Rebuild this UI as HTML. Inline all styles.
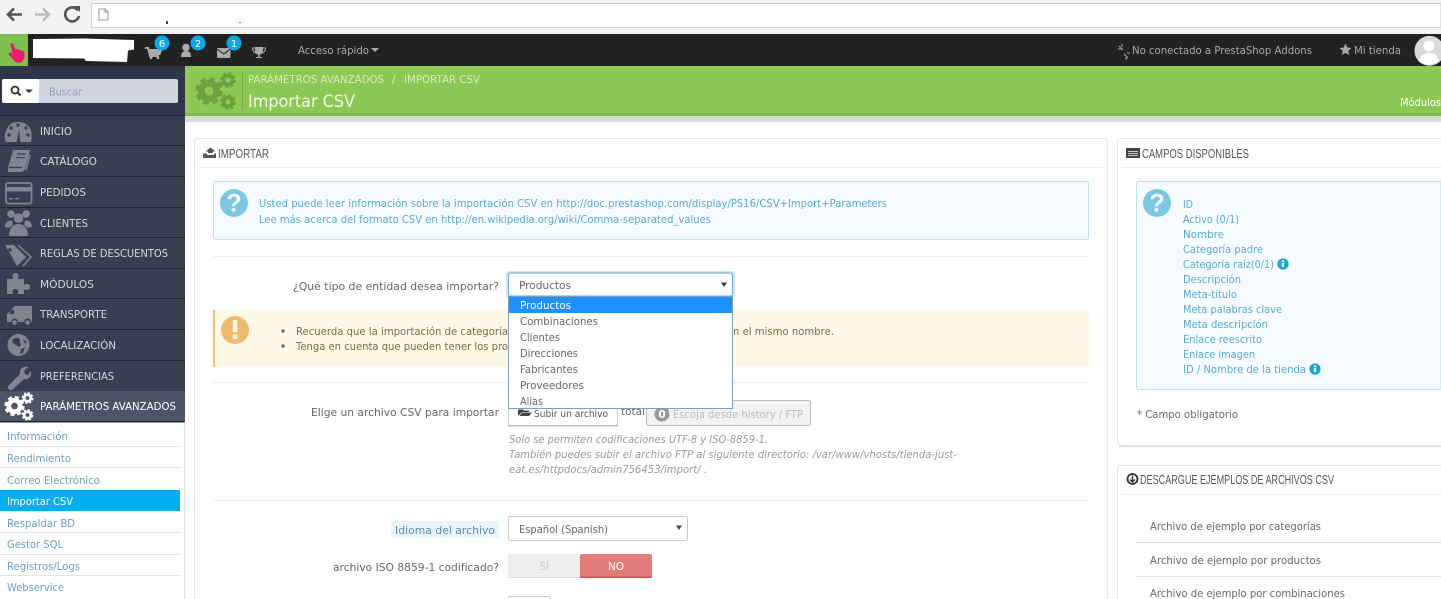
<!DOCTYPE html>
<html lang="es"><head><meta charset="utf-8"><title>Importar CSV</title>
<style>
html,body{margin:0;padding:0;background:#fff;width:1441px;height:599px;overflow:hidden}
svg{display:block}
text{font-family:"DejaVu Sans",sans-serif;font-size:11px;fill:#666}
.s text,text.s{fill:#d5d8de;font-size:11px}
.sub text{fill:#6a9fc0;font-size:11px}
.i text,text.i{fill:#5aa9cd}
.c{font-family:"Liberation Sans",sans-serif;font-size:13px;fill:#555}
.it{font-style:italic;fill:#999}
</style></head><body>
<svg xmlns="http://www.w3.org/2000/svg" width="1441" height="599" viewBox="0 0 1441 599">
<defs>
<g id="gear"><circle r="6" fill="none" stroke="currentColor" stroke-width="5"/><circle r="9" fill="none" stroke="currentColor" stroke-width="3.4" stroke-dasharray="4.1 2.97"/></g>
<g id="q"><circle r="14" fill="#7cc8e4"/><text x="0" y="8.5" text-anchor="middle" style="font-family:'Liberation Sans',sans-serif;font-size:25px;font-weight:bold;fill:#f4fbfe">?</text></g>
<g id="inf"><circle r="5.6" fill="#16a3de"/><rect x="-1.2" y="-1" width="2.4" height="4" fill="#fff"/><rect x="-1.2" y="-3.6" width="2.4" height="1.8" fill="#fff"/></g>
</defs>

<!-- browser chrome -->
<rect width="1441" height="34" fill="#f3f3f3"/>
<path d="M1441 3.500H93Q91.500 3.500 91.500 5V26Q91.500 27.500 93 27.500H1441Z" fill="#fff" stroke="#cfcfcf"/>
<path d="M8 14.500H22M14 8.500L8 14.500L14 20.500" fill="none" stroke="#555" stroke-width="2.600"/>
<path d="M35 14.500H49M43 8.500L49 14.500L43 20.500" fill="none" stroke="#bdbdbd" stroke-width="2.600"/>
<path d="M78 10.500A7 7 0 1 0 79 16" fill="none" stroke="#555" stroke-width="2.600"/><path d="M74 6L80 6L80 12Z" fill="#555"/>
<path d="M99 9H105L108 12V20H99Z" fill="#fff" stroke="#999"/><path d="M105 9V12H108" fill="none" stroke="#999"/>
<rect x="166" y="21" width="2" height="3" fill="#444"/><rect x="239" y="22" width="2" height="1" fill="#777"/>

<!-- top bar -->
<rect y="34" width="1441" height="32" fill="#222"/>
<rect y="34" width="28" height="32" fill="#7fbf4d"/>
<path d="M10.500 44.500C10.500 42.500 13 42.500 13.500 44.500L15.500 49.500C17 48.500 18 49 18.500 50C20 49.500 21 50 21.500 51C23 50.500 24.500 51.500 24.500 53.500L24.500 58L21.500 62.500L16 62.500L13.500 60L8.500 54.500C8 52.500 10 52 12.500 53.500Z" fill="#ec1a73"/>
<path d="M33 39L85 38.500L134 40V49.500L128 50.500L127 62L86 61L84 58.500L33 58Z" fill="#fff"/>
<!-- cart -->
<path d="M145 48H148L150 56H159M149 50H161L159.500 54H150" fill="none" stroke="#aaa" stroke-width="2"/><rect x="149.500" y="50" width="10" height="4" fill="#aaa"/><circle cx="151" cy="58" r="1.300" fill="#aaa"/><circle cx="158" cy="58" r="1.300" fill="#aaa"/>
<!-- user -->
<circle cx="186" cy="47.500" r="3.800" fill="#aaa"/><path d="M181 57C181 52 183 51 186 51C189 51 191 52 191 57Z" fill="#aaa"/>
<!-- mail -->
<rect x="217" y="48" width="13.500" height="10" rx="1" fill="#aaa"/><path d="M217 49L223.700 54L230.500 49" fill="none" stroke="#222" stroke-width="1"/>
<!-- trophy -->
<path d="M255 47H263V51C263 54 261 54 259.800 55V57H262V58H256V57H258.200V55C257 54 255 54 255 51Z" fill="#aaa"/><path d="M255 48H252.500C252.500 51 254 52.500 256 53M263 48H265.500C265.500 51 264 52.500 262 53" fill="none" stroke="#aaa"/>
<g>
<circle cx="162" cy="43" r="7.500" fill="#0ba8e6"/><circle cx="198" cy="43" r="7.500" fill="#0ba8e6"/><circle cx="234" cy="43" r="7.500" fill="#0ba8e6"/>
<text x="162" y="47" text-anchor="middle" style="fill:#fff;font-size:10px">6</text><text x="198" y="47" text-anchor="middle" style="fill:#fff;font-size:10px">2</text><text x="234" y="47" text-anchor="middle" style="fill:#fff;font-size:10px">1</text>
</g>
<text x="298" y="54" textLength="71" lengthAdjust="spacingAndGlyphs" style="fill:#a9a9a9;font-size:10.500px">Acceso rápido</text>
<path d="M371 48H379L375 52Z" fill="#a9a9a9"/>
<path d="M1119 46L1123 50M1124 54L1128 58M1122 44V47M1118 49H1121M1126 57V60M1127 53H1130" stroke="#aaa" fill="none"/>
<text x="1132" y="54" textLength="180" lengthAdjust="spacingAndGlyphs" style="fill:#a9a9a9;font-size:10.500px">No conectado a PrestaShop Addons</text>
<path d="M1345.500 43.500L1347.300 47.500L1351.500 48L1348.300 50.800L1349.200 55L1345.500 52.800L1341.800 55L1342.700 50.800L1339.500 48L1343.700 47.500Z" fill="#aaa"/>
<text x="1354" y="54" textLength="47" lengthAdjust="spacingAndGlyphs" style="fill:#a9a9a9;font-size:10.500px">Mi tienda</text>
<path d="M1441 41.200A15 15 0 1 0 1441 60.400Z" fill="#d9d9d9"/><circle cx="1429" cy="46" r="5.500" fill="#fff"/><path d="M1419 62C1420 54 1425 53 1429 53C1433 53 1438 54 1439 62L1429 65Z" fill="#fff"/>

<!-- sidebar -->
<rect y="66" width="185" height="533" fill="#fff"/>
<rect y="66" width="185" height="50" fill="#2f3648"/>
<rect x="2" y="79" width="176" height="24" rx="2" fill="#d0d5e0"/>
<rect x="2" y="79" width="37" height="24" rx="2" fill="#fff"/>
<circle cx="15" cy="90" r="3.500" fill="none" stroke="#333" stroke-width="1.800"/><path d="M17.500 92.500L20.500 95.500" stroke="#333" stroke-width="2"/><path d="M25 89.500H33L29 93Z" fill="#333"/>
<text x="49" y="95.500" textLength="33" lengthAdjust="spacingAndGlyphs" style="fill:#97a0ae;font-size:10.500px">Buscar</text>

<rect y="115" width="185" height="306" fill="#383f50"/>
<g fill="#22262f"><rect y="115" width="185" height="1"/><rect y="145" width="185" height="1"/><rect y="176" width="185" height="1"/><rect y="207" width="185" height="1"/><rect y="237" width="185" height="1"/><rect y="268" width="185" height="1"/><rect y="298" width="185" height="1"/><rect y="329" width="185" height="1"/><rect y="360" width="185" height="1"/></g>
<rect y="391" width="185" height="30" fill="#4c5568"/><rect y="421" width="185" height="1.500" fill="#22262f"/>

<!-- sidebar icons -->
<g fill="#82858f">
<path d="M6 142A12.500 12.500 0 0 1 6 131C8 124 14 122 18.500 122C23 122 29 124 31 131C32 135 31.500 139 31 142Z"/>
<path d="M16.500 142L19 130L20.500 142Z" fill="#383f50"/>
<circle cx="11" cy="128" r="1.700" fill="#383f50"/><circle cx="18" cy="125" r="1.700" fill="#383f50"/><circle cx="26" cy="128" r="1.700" fill="#383f50"/><circle cx="9" cy="135" r="1.700" fill="#383f50"/><circle cx="28" cy="135" r="1.700" fill="#383f50"/>
<path d="M13 150H30L26 166C25.500 170 23 172 20 172H8L8 168Z"/><path d="M9 167.500H22" stroke="#383f50" stroke-width="1.300"/><path d="M17 154H26M16 157.500H25" stroke="#383f50" stroke-width="1.200"/>
<path d="M26 170L30 155" stroke="#82858f" stroke-width="1.500" fill="none"/>
<rect x="6" y="183" width="25.500" height="20.500" rx="2" fill="none" stroke="#82858f" stroke-width="1.800"/><rect x="6" y="187" width="25" height="4.500"/><rect x="9" y="198" width="4" height="1.400"/><rect x="15" y="198" width="4" height="1.400"/>
<circle cx="11" cy="214" r="3.800"/><circle cx="26" cy="214" r="3.800"/><circle cx="18.500" cy="218" r="4.800"/><path d="M5 227C5 222 8 220.500 12 220.500L13 225L9 228ZM32 227C32 222 29 220.500 25 220.500L24 225L28 228Z"/><path d="M9 236C9 228 13 224 18.500 224C24 224 28 228 28 236Z"/>
<path d="M5 245H14L26 257L17 266Z"/><circle cx="10" cy="250" r="1.800" fill="#383f50"/><path d="M18 245L31 257L23 266" fill="none" stroke="#82858f" stroke-width="1.500"/>
<path d="M7 279H13C12 275 13 273 15.500 273C18 273 19 275 18 279H24V285C27 283 30 284 30 287C30 290 27 291 24 289V294H18C19 290 17 289 15.500 289C13 289 12 291 13 294H7Z"/>
<path d="M15 306H32V322H31A3.500 3.500 0 0 0 24 322H18A3.500 3.500 0 0 0 11 322H7V314Z"/><path d="M11 310H14V314H9Z" fill="#383f50"/><circle cx="14.500" cy="322.500" r="2.300"/><circle cx="27.500" cy="322.500" r="2.300"/>
<circle cx="18.500" cy="345" r="11"/><path d="M12 340C15 337 19 337 20 340C19 343 23 345 19 347C17 345 13 345 12 340ZM21 349L25 347L23 353L20 354ZM23 339L27 342L25 344Z" fill="#383f50"/>
<path d="M8 386L20 374C19 369 23 366 28 367L24 371L25 374L28 375L31 371C32 376 29 380 24 379L12 390C10 391 7 388 8 386Z"/>
</g>
<g color="#fff" fill="#fff">
<use href="#gear" transform="translate(14.500 406) scale(.95)"/>
<use href="#gear" transform="translate(27.500 398) scale(.55)"/>
<use href="#gear" transform="translate(27.500 415) scale(.55)"/>
</g>

<g class="s">
<text x="40" y="135" textLength="32" lengthAdjust="spacingAndGlyphs">INICIO</text>
<text x="40" y="165" textLength="57" lengthAdjust="spacingAndGlyphs">CATÁLOGO</text>
<text x="40" y="196" textLength="46" lengthAdjust="spacingAndGlyphs">PEDIDOS</text>
<text x="40" y="227" textLength="48" lengthAdjust="spacingAndGlyphs">CLIENTES</text>
<text x="40" y="257" textLength="128" lengthAdjust="spacingAndGlyphs">REGLAS DE DESCUENTOS</text>
<text x="40" y="288" textLength="54" lengthAdjust="spacingAndGlyphs">MÓDULOS</text>
<text x="40" y="318" textLength="67" lengthAdjust="spacingAndGlyphs">TRANSPORTE</text>
<text x="40" y="349" textLength="76" lengthAdjust="spacingAndGlyphs">LOCALIZACIÓN</text>
<text x="40" y="380" textLength="74" lengthAdjust="spacingAndGlyphs">PREFERENCIAS</text>
<text x="40" y="410" textLength="136" lengthAdjust="spacingAndGlyphs" style="fill:#fff">PARÁMETROS AVANZADOS</text>
</g>

<rect x="184" y="422" width="1" height="177" fill="#e3e3e3"/>
<g fill="#d6e9f2"><rect y="446" width="180" height="1"/><rect y="467" width="180" height="1"/><rect y="532" width="180" height="1"/><rect y="554" width="180" height="1"/><rect y="575" width="180" height="1"/></g>
<rect y="490" width="180" height="21" fill="#00aff0"/>
<g class="sub">
<text x="7" y="440" textLength="61" lengthAdjust="spacingAndGlyphs">Información</text>
<text x="7" y="462" textLength="64" lengthAdjust="spacingAndGlyphs">Rendimiento</text>
<text x="7" y="484" textLength="93" lengthAdjust="spacingAndGlyphs">Correo Electrónico</text>
<text x="7" y="505" textLength="66" lengthAdjust="spacingAndGlyphs" style="fill:#fff">Importar CSV</text>
<text x="7" y="527" textLength="68" lengthAdjust="spacingAndGlyphs">Respaldar BD</text>
<text x="7" y="548" textLength="56" lengthAdjust="spacingAndGlyphs">Gestor SQL</text>
<text x="7" y="570" textLength="73" lengthAdjust="spacingAndGlyphs">Registros/Logs</text>
<text x="7" y="591" textLength="57" lengthAdjust="spacingAndGlyphs">Webservice</text>
</g>

<!-- green header -->
<rect x="185" y="66" width="1256" height="47" fill="#8bc954"/>
<rect x="185" y="113" width="1256" height="3" fill="#7fb94c"/>
<rect x="185" y="116" width="1256" height="6" fill="#dadada"/>
<rect x="242" y="72" width="1" height="38" fill="#75ad42"/>
<g color="#6da23f">
<use href="#gear" transform="translate(209 91) scale(1.300)"/>
<use href="#gear" transform="translate(228 80) scale(.75)"/>
<use href="#gear" transform="translate(228 102) scale(.75)"/>
</g>
<text x="248" y="83" textLength="136" lengthAdjust="spacingAndGlyphs" style="fill:#d6eebd;font-size:10.500px">PARÁMETROS AVANZADOS</text>
<text x="392" y="83" style="fill:#d6eebd;font-size:10.500px">/</text>
<text x="404" y="83" textLength="76" lengthAdjust="spacingAndGlyphs" style="fill:#d6eebd;font-size:10.500px">IMPORTAR CSV</text>
<text x="248" y="107" textLength="107" lengthAdjust="spacingAndGlyphs" style="fill:#f1f9e8;font-size:17px">Importar CSV</text>
<text x="1400" y="106" textLength="41" lengthAdjust="spacingAndGlyphs" style="fill:#fff;font-size:10.500px">Módulos</text>

<!-- main panel -->
<path d="M194.500 599V142.500Q194.500 138.500 198.500 138.500H1103.500Q1107.500 138.500 1107.500 142.500V599" fill="#fff" stroke="#e6e6e6"/>
<rect x="199" y="167" width="904" height="1" fill="#eee"/>
<path d="M208 153V151.500H205.500L210.500 147.500L215.500 151.500H213V153ZM203 153.500H207V155H214V153.500H216V158H203Z" fill="#555"/>
<text class="c" x="218" y="158" textLength="51" lengthAdjust="spacingAndGlyphs">IMPORTAR</text>

<rect x="213.500" y="181.500" width="875" height="58" rx="2" fill="#f5fbfe" stroke="#bfe3ee"/>
<use href="#q" x="234" y="203"/>
<g class="i">
<text x="259" y="207" textLength="628" lengthAdjust="spacingAndGlyphs">Usted puede leer información sobre la importación CSV en http://doc.prestashop.com/display/PS16/CSV+Import+Parameters</text>
<text x="259" y="223" textLength="452" lengthAdjust="spacingAndGlyphs">Lee más acerca del formato CSV en http://en.wikipedia.org/wiki/Comma-separated_values</text>
</g>
<rect x="213" y="256" width="876" height="1" fill="#eee"/>
<text x="293" y="290" textLength="206" lengthAdjust="spacingAndGlyphs">¿Qué tipo de entidad desea importar?</text>

<!-- warning -->
<rect x="213" y="310" width="876" height="57" fill="#fef8e7"/>
<rect x="213" y="310" width="2" height="57" fill="#efbf78"/>
<circle cx="235" cy="330" r="14" fill="#efb970"/>
<rect x="232.800" y="320" width="4.500" height="12" fill="#fef8e7"/><rect x="232.800" y="334.500" width="4.500" height="4.500" fill="#fef8e7"/>
<circle cx="283" cy="331" r="1.700" fill="#7a6a4d"/><circle cx="283" cy="346" r="1.700" fill="#7a6a4d"/>
<text x="296" y="335" textLength="212" lengthAdjust="spacingAndGlyphs" style="fill:#7d6a4a">Recuerda que la importación de categoría</text>
<text x="296" y="350" textLength="212" lengthAdjust="spacingAndGlyphs" style="fill:#7d6a4a">Tenga en cuenta que pueden tener los pro</text>
<text x="733" y="335" textLength="101" lengthAdjust="spacingAndGlyphs" style="fill:#7d6a4a">n el mismo nombre.</text>

<rect x="213" y="382" width="876" height="1" fill="#eee"/>
<text x="311" y="416" textLength="188" lengthAdjust="spacingAndGlyphs">Elige un archivo CSV para importar</text>

<!-- file buttons -->
<rect x="508.500" y="396.500" width="109" height="29" rx="2" fill="#fff" stroke="#ccc"/>
<rect x="508" y="425" width="110" height="1.500" fill="#bbb"/>
<path d="M518 409.500H523L524 410.500H529V412H522L518 416ZM522 412.500H532L529 416H519.500Z" fill="#444"/>
<text x="534" y="417" textLength="74" lengthAdjust="spacingAndGlyphs" style="font-size:10px;fill:#555">Subir un archivo</text>
<text x="621" y="415" textLength="24" lengthAdjust="spacingAndGlyphs">total</text>
<rect x="646.500" y="400.500" width="164" height="25" rx="2" fill="#f2f2f2" stroke="#bbb"/>
<circle cx="662" cy="414" r="7.500" fill="#999"/><text x="662" y="418" text-anchor="middle" style="fill:#fff;font-size:10.500px;font-weight:bold">0</text>
<text x="673" y="418" textLength="130" lengthAdjust="spacingAndGlyphs" style="fill:#bbb">Escoja desde history / FTP</text>

<text class="it" x="509" y="443" textLength="259" lengthAdjust="spacingAndGlyphs">Solo se permiten codificaciones UTF-8 y ISO-8859-1.</text>
<text class="it" x="509" y="458" textLength="448" lengthAdjust="spacingAndGlyphs">También puedes subir el archivo FTP al siguiente directorio: /var/www/vhosts/tienda-just-</text>
<text class="it" x="509" y="473" textLength="198" lengthAdjust="spacingAndGlyphs">eat.es/httpdocs/admin756453/import/ .</text>

<rect x="213" y="500" width="876" height="1" fill="#eee"/>
<rect x="391" y="521" width="108" height="17" fill="#e9f4fa"/>
<text x="395" y="534" textLength="100" lengthAdjust="spacingAndGlyphs" style="fill:#5b8ba8">Idioma del archivo</text>
<rect x="508.500" y="516.500" width="179" height="24" rx="2" fill="#fff" stroke="#c8c8c8"/>
<text x="519" y="533" textLength="89" lengthAdjust="spacingAndGlyphs">Español (Spanish)</text>
<path d="M676 525.500H682L679 530Z" fill="#444"/>
<text x="333" y="571" textLength="166" lengthAdjust="spacingAndGlyphs">archivo ISO 8859-1 codificado?</text>
<rect x="508" y="554" width="72" height="24" rx="2" fill="#eee"/><rect x="508" y="577" width="72" height="1" fill="#ddd"/>
<text x="540" y="570" textLength="9" lengthAdjust="spacingAndGlyphs" style="fill:#ccc;font-size:10.500px">SÍ</text>
<rect x="580" y="554" width="72" height="24" rx="2" fill="#e27c79"/><rect x="580" y="576.500" width="72" height="1.500" fill="#c95552"/>
<text x="608" y="570" textLength="16" lengthAdjust="spacingAndGlyphs" style="fill:#fff;font-size:10.500px">NO</text>
<path d="M508.500 599V598.500Q508.500 596.500 510.500 596.500H548.500Q550.500 596.500 550.500 598.500V599" fill="#fff" stroke="#c8c8c8"/>

<!-- right panel 1 -->
<path d="M1441 138.500H1121.500Q1117.500 138.500 1117.500 142.500V441.500Q1117.500 445.500 1121.500 445.500H1441" fill="#fff" stroke="#e6e6e6"/>
<rect x="1119" y="445" width="322" height="2" fill="#e4e4e4"/>
<rect x="1122" y="167" width="319" height="1" fill="#eee"/>
<rect x="1126" y="148" width="14" height="10" fill="#444"/><path d="M1128 151.500H1138M1128 153.500H1138M1128 155.500H1138" stroke="#ccc" stroke-width="1"/>
<text class="c" x="1142" y="158" textLength="107" lengthAdjust="spacingAndGlyphs">CAMPOS DISPONIBLES</text>
<path d="M1441 181.500H1138.500Q1136.500 181.500 1136.500 183.500V387.500Q1136.500 389.500 1138.500 389.500H1441Z" fill="#f5fbfe" stroke="#bfe3ee"/>
<use href="#q" x="1157" y="203"/>
<g class="i">
<text x="1183" y="208" textLength="10" lengthAdjust="spacingAndGlyphs">ID</text>
<text x="1183" y="223" textLength="56" lengthAdjust="spacingAndGlyphs">Activo (0/1)</text>
<text x="1183" y="238" textLength="41" lengthAdjust="spacingAndGlyphs">Nombre</text>
<text x="1183" y="253" textLength="80" lengthAdjust="spacingAndGlyphs">Categoría padre</text>
<text x="1183" y="268" textLength="91" lengthAdjust="spacingAndGlyphs">Categoría raíz(0/1)</text>
<text x="1183" y="283" textLength="58" lengthAdjust="spacingAndGlyphs">Descripción</text>
<text x="1183" y="298" textLength="54" lengthAdjust="spacingAndGlyphs">Meta-título</text>
<text x="1183" y="313" textLength="99" lengthAdjust="spacingAndGlyphs">Meta palabras clave</text>
<text x="1183" y="328" textLength="85" lengthAdjust="spacingAndGlyphs">Meta descripción</text>
<text x="1183" y="343" textLength="79" lengthAdjust="spacingAndGlyphs">Enlace reescrito</text>
<text x="1183" y="358" textLength="72" lengthAdjust="spacingAndGlyphs">Enlace imagen</text>
<text x="1183" y="373" textLength="123" lengthAdjust="spacingAndGlyphs">ID / Nombre de la tienda</text>
</g>
<use href="#inf" x="1283" y="264"/><use href="#inf" x="1315" y="369"/>
<text x="1137" y="418" textLength="101" lengthAdjust="spacingAndGlyphs">* Campo obligatorio</text>

<!-- right panel 2 -->
<path d="M1441 465.500H1121.500Q1117.500 465.500 1117.500 469.500V599" fill="#fff" stroke="#e6e6e6"/>
<rect x="1122" y="494" width="319" height="1" fill="#eee"/>
<circle cx="1132.500" cy="479" r="5" fill="none" stroke="#333" stroke-width="1.800"/><path d="M1132.500 475.500V481M1130 479.500L1132.500 482L1135 479.500" fill="none" stroke="#333" stroke-width="1.400"/>
<text class="c" x="1140" y="484" textLength="194" lengthAdjust="spacingAndGlyphs">DESCARGUE EJEMPLOS DE ARCHIVOS CSV</text>
<text x="1150" y="530" textLength="171" lengthAdjust="spacingAndGlyphs">Archivo de ejemplo por categorías</text>
<rect x="1136" y="542" width="305" height="1" fill="#ddd"/>
<text x="1150" y="564" textLength="171" lengthAdjust="spacingAndGlyphs">Archivo de ejemplo por productos</text>
<rect x="1136" y="576" width="305" height="1" fill="#ddd"/>
<text x="1150" y="597" textLength="195" lengthAdjust="spacingAndGlyphs">Archivo de ejemplo por combinaciones</text>

<!-- select + dropdown -->
<rect x="506" y="271" width="229" height="27" rx="3" fill="#cfe6fb"/>
<rect x="508.500" y="273" width="224" height="23" rx="2" fill="#fff" stroke="#6ea4d6"/>
<text x="519" y="289" textLength="52" lengthAdjust="spacingAndGlyphs">Productos</text>
<path d="M721 282.500H727L724 287Z" fill="#333"/>
<rect x="508.500" y="296.500" width="224" height="112" fill="#fff" stroke="#7f9db9"/>
<rect x="509" y="297" width="223" height="16" fill="#1e90ff"/>
<text x="520" y="309" textLength="51" lengthAdjust="spacingAndGlyphs" style="fill:#fff">Productos</text>
<text x="520" y="325" textLength="78" lengthAdjust="spacingAndGlyphs">Combinaciones</text>
<text x="520" y="341" textLength="40" lengthAdjust="spacingAndGlyphs">Clientes</text>
<text x="520" y="357" textLength="58" lengthAdjust="spacingAndGlyphs">Direcciones</text>
<text x="520" y="373" textLength="58" lengthAdjust="spacingAndGlyphs">Fabricantes</text>
<text x="520" y="389" textLength="64" lengthAdjust="spacingAndGlyphs">Proveedores</text>
<text x="520" y="405" textLength="23" lengthAdjust="spacingAndGlyphs">Alias</text>
</svg>
</body></html>
